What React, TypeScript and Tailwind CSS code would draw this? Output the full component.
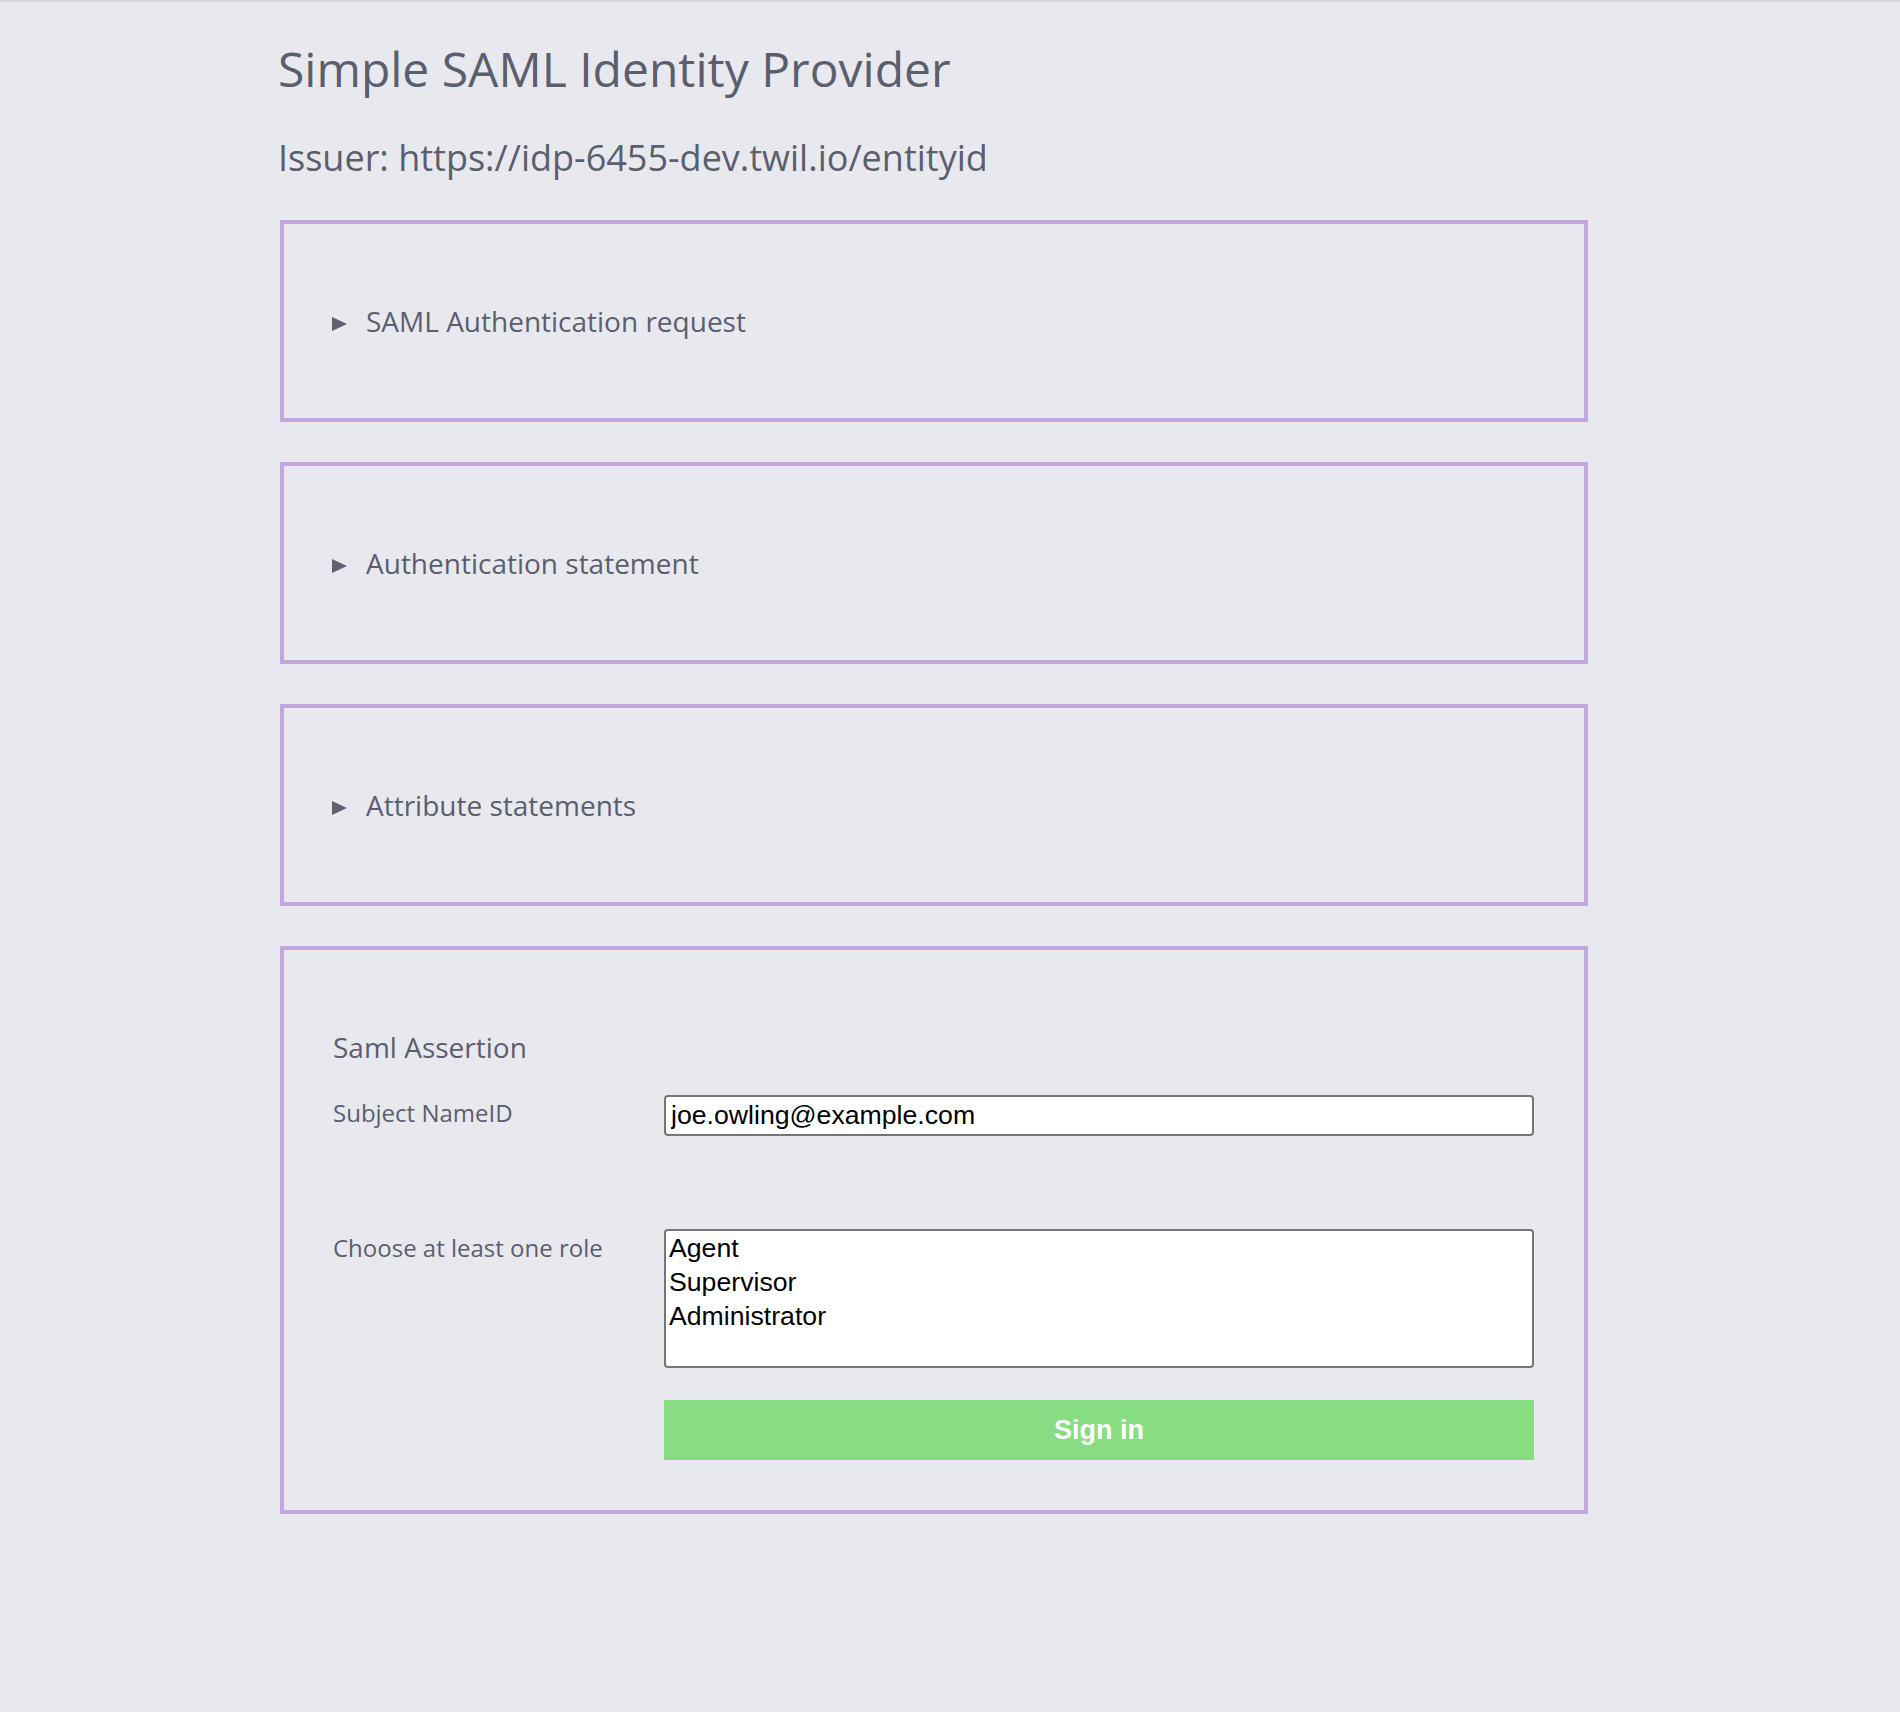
import React from 'react';

const sections = ['SAML Authentication request', 'Authentication statement', 'Attribute statements'];
const roles = ['Agent', 'Supervisor', 'Administrator'];

function Caret() {
  return (
    <svg width="15" height="14" viewBox="0 0 15 14" className="mt-[5px] shrink-0">
      <polygon points="0,0 15,7 0,14" fill="#5e6171" />
    </svg>
  );
}

export default function App() {
  return (
    <div className="min-h-[1712px] w-full bg-[#e8e9ef] border-t-2 border-[#d6d7dc] font-['Open_Sans',sans-serif] text-[#5b5e6d]">
      <div className="ml-[280px] w-[1308px] pt-[34px] pb-[100px]">
        <h1 className="text-[48px] leading-[65px] -ml-[2px]">Simple SAML Identity Provider</h1>
        <h2 className="mt-[32px] text-[36px] leading-[49px] -ml-[2px]">Issuer: https://idp-6455-dev.twil.io/entityid</h2>

        <div className="mt-[38px] flex flex-col gap-[40px]">
          {sections.map((s) => (
            <details key={s} className="border-4 border-[#c1a6dc] px-[48px] py-[78px]">
              <summary className="flex list-none items-center gap-[19px] text-[28px] leading-[38px] cursor-pointer [&::-webkit-details-marker]:hidden">
                <Caret />
                <span>{s}</span>
              </summary>
            </details>
          ))}

          <form
            className="border-4 border-[#c1a6dc] pl-[49px] pr-[50px] pt-[78px] pb-[50px]"
            onSubmit={(e) => e.preventDefault()}
          >
            <h3 className="text-[28px] leading-[38px]">Saml Assertion</h3>

            <div className="mt-[29px] flex">
              <label className="w-[331px] shrink-0 pt-[1px] text-[24px] leading-[33px]">Subject NameID</label>
              <input
                defaultValue="joe.owling@example.com"
                className="h-[41px] flex-1 rounded-[4px] border-2 border-[#767676] bg-white px-[5px] font-['Liberation_Sans',Arial,sans-serif] text-[26.67px] text-black outline-none"
              />
            </div>

            <div className="mt-[93px] flex">
              <label className="w-[331px] shrink-0 pt-[2px] text-[24px] leading-[33px]">Choose at least one role</label>
              <div
                role="listbox"
                aria-multiselectable="true"
                className="h-[139px] flex-1 rounded-[4px] border-2 border-[#767676] bg-white px-[3px] font-['Liberation_Sans',Arial,sans-serif] text-[26.67px] leading-[34px] text-black"
              >
                {roles.map((r) => (
                  <div key={r} role="option">
                    {r}
                  </div>
                ))}
              </div>
            </div>

            <div className="mt-[32px] flex">
              <div className="w-[331px] shrink-0" />
              <button
                type="submit"
                className="h-[60px] flex-1 bg-[#88dc82] font-['Liberation_Sans',Arial,sans-serif] text-[27px] font-bold text-white"
              >
                Sign in
              </button>
            </div>
          </form>
        </div>
      </div>
    </div>
  );
}
